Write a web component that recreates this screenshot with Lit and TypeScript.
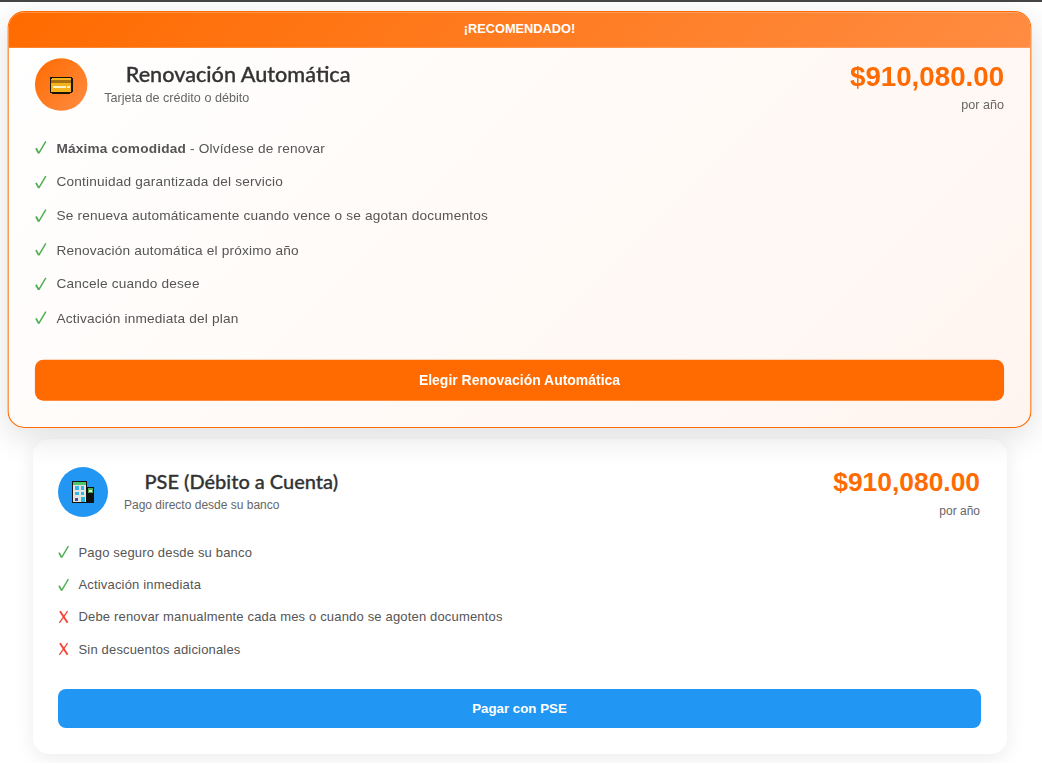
import { LitElement, html, css, svg } from "lit";
import { customElement } from "lit/decorators.js";

const cardIcon = svg`<svg class="emoji" viewBox="0 0 24 24" width="24" height="24" shape-rendering="crispEdges">
  <rect x="1" y="4.5" width="22" height="16" rx="2.5" fill="#1a1408"/>
  <rect x="2.5" y="6" width="19" height="13" rx="1" fill="#f5b21a"/>
  <rect x="2.5" y="8" width="19" height="2.5" fill="#a9700f"/>
  <rect x="4.5" y="13.5" width="12" height="1.6" fill="#fff3c9"/>
  <rect x="18" y="13.5" width="2" height="1.6" fill="#fff3c9"/>
</svg>`;

const bankIcon = svg`<svg class="emoji" viewBox="0 0 24 24" width="24" height="24" shape-rendering="crispEdges">
  <rect x="15" y="7" width="8" height="16" fill="#111"/>
  <rect x="16.5" y="8" width="5.5" height="5" fill="#4caf50"/>
  <rect x="18" y="9.5" width="2.5" height="2" fill="#d8f5d8"/>
  <rect x="1" y="1" width="15" height="22" fill="#111"/>
  <rect x="2" y="2" width="13" height="2.5" fill="#4cc76a"/>
  <rect x="2" y="4.5" width="13" height="17.5" fill="#e4e4e0"/>
  <rect x="4" y="6" width="3.5" height="3.5" fill="#35b6ea"/>
  <rect x="9.5" y="6" width="3.5" height="3.5" fill="#35b6ea"/>
  <rect x="4" y="11.5" width="3.5" height="3.5" fill="#35b6ea"/>
  <rect x="9.5" y="11.5" width="3.5" height="3.5" fill="#35b6ea"/>
  <rect x="9.5" y="17" width="4" height="5" fill="#29b6d8"/>
  <rect x="4" y="18" width="3" height="2.5" fill="#3a4fa8"/>
</svg>`;

const checkMark = svg`<svg class="mark-svg" viewBox="0 0 12 14" width="12" height="14">
  <path d="M1 7.6 L3.6 12.4" fill="none" stroke="#4caf50" stroke-width="1.7"/>
  <path d="M3.6 12.6 L10.4 1.2" fill="none" stroke="#4caf50" stroke-width="1.4"/>
</svg>`;

const crossMark = svg`<svg class="mark-svg" viewBox="0 0 12 14" width="12" height="14">
  <path d="M2 1.2 L9.6 12.8" fill="none" stroke="#f44336" stroke-width="1.9"/>
  <path d="M9.6 1.2 L1.4 12.8" fill="none" stroke="#f44336" stroke-width="1.3"/>
</svg>`;

type Feature = { ok: boolean; strong?: string; text: string };

const autoFeatures: Feature[] = [
  { ok: true, strong: "Máxima comodidad", text: " - Olvídese de renovar" },
  { ok: true, text: "Continuidad garantizada del servicio" },
  { ok: true, text: "Se renueva automáticamente cuando vence o se agotan documentos" },
  { ok: true, text: "Renovación automática el próximo año" },
  { ok: true, text: "Cancele cuando desee" },
  { ok: true, text: "Activación inmediata del plan" },
];

const pseFeatures: Feature[] = [
  { ok: true, text: "Pago seguro desde su banco" },
  { ok: true, text: "Activación inmediata" },
  { ok: false, text: "Debe renovar manualmente cada mes o cuando se agoten documentos" },
  { ok: false, text: "Sin descuentos adicionales" },
];

@customElement("app-root")
export class AppRoot extends LitElement {
  static styles = css`
    :host {
      display: block;
      font-family: "Liberation Sans", Arial, sans-serif;
      color: #333;
      background: #fff;
    }
    * { box-sizing: border-box; }
    .page {
      border-top: 2px solid #444;
      padding: 19px 0 0 33px;
      height: 763px;
      overflow: hidden;
    }
    .card {
      width: 974px;
      background: #fff;
      border-radius: 16px;
      box-shadow: 0 4px 20px rgba(0, 0, 0, 0.08);
      padding: 28px 26px 26.4px 25px;
    }
    .recommended {
      width: 975px;
      height: 397px;
      padding: 0 0 25px;
      margin: 0 0 21px -1px;
      border: 1px solid #ff6b00;
      overflow: hidden;
      transform: scale(1.05);
      background: linear-gradient(135deg, #fff 0%, #fff5f0 100%);
      box-shadow: 0 8px 30px rgba(0, 0, 0, 0.12);
    }
    .banner {
      height: 34px;
      padding-bottom: 2px;
      display: flex;
      align-items: center;
      justify-content: center;
      background: linear-gradient(135deg, #ff6b00 0%, #ff8c42 100%);
      color: #fff;
      font-size: 12.2px;
      font-weight: 700;
    }
    .body { padding: 10px 25px 0; }
    .head {
      display: flex;
      justify-content: space-between;
      align-items: flex-start;
      height: 50px;
    }
    .identity { display: flex; align-items: center; gap: 16px; }
    .icon {
      width: 50px;
      height: 50px;
      border-radius: 50%;
      display: flex;
      align-items: center;
      justify-content: center;
      flex: none;
    }
    .icon.orange { background: linear-gradient(135deg, #ff6b00 0%, #ff8c42 100%); }
    .icon.blue { background: #2196f3; }
    .emoji { display: block; }
    .text { padding-bottom: 4px; }
    .title {
      margin: 0 0 0 20.5px;
      font-family: Lato, sans-serif;
      font-size: 20px;
      line-height: 24px;
      font-weight: 500;
      color: #333;
      -webkit-text-stroke: 0.3px #333;
    }
    .recommended .title { font-size: 20.6px; margin-top: 1.5px; }
    .sub {
      margin-top: 5px;
      font-size: 12px;
      line-height: 14px;
      color: #666;
    }
    .recommended .sub { margin-top: 3.5px; }
    .price-box { text-align: right; padding: 0 1px 0 0; }
    .recommended .price-box { padding: 2px 0 0; }
    .price {
      font-size: 26.4px;
      line-height: 30px;
      font-weight: 700;
      color: #ff6b00;
    }
    .per {
      margin-top: 7px;
      font-size: 12px;
      line-height: 14px;
      color: #666;
    }
    .recommended .per { margin-top: 5px; }
    .list {
      list-style: none;
      margin: 19px 0 0;
      padding: 0;
      display: flex;
      flex-direction: column;
    }
    .list li {
      height: 32.4px;
      display: flex;
      align-items: center;
      font-size: 13px;
      letter-spacing: 0.17px;
      color: #555;
    }
    .mark { width: 20.5px; flex: none; display: flex; }
    .mark-svg { display: block; }
    .cta {
      display: block;
      width: 100%;
      height: 39px;
      margin-top: 23px;
      border: 0;
      border-radius: 8px;
      color: #fff;
      font-family: inherit;
      font-size: 13.3px;
      font-weight: 700;
    }
    .cta.orange { background: #ff6b00; margin-top: 24px; }
    .cta.blue { background: #2196f3; }
  `;

  private feats(items: Feature[]) {
    return html`<ul class="list">
      ${items.map(
        (f) => html`<li>
          <span class="mark">${f.ok ? checkMark : crossMark}</span>
          <span>${f.strong ? html`<strong>${f.strong}</strong>` : ""}${f.text}</span>
        </li>`
      )}
    </ul>`;
  }

  private head(color: string, icon: unknown, title: string, sub: string) {
    return html`<div class="head">
      <div class="identity">
        <div class="icon ${color}">${icon}</div>
        <div class="text">
          <h3 class="title">${title}</h3>
          <div class="sub">${sub}</div>
        </div>
      </div>
      <div class="price-box">
        <div class="price">$910,080.00</div>
        <div class="per">por año</div>
      </div>
    </div>`;
  }

  render() {
    return html`<div class="page">
      <section class="card recommended">
        <div class="banner">¡RECOMENDADO!</div>
        <div class="body">
          ${this.head("orange", cardIcon, "Renovación Automática", "Tarjeta de crédito o débito")}
          ${this.feats(autoFeatures)}
          <button class="cta orange">Elegir Renovación Automática</button>
        </div>
      </section>
      <section class="card">
        ${this.head("blue", bankIcon, "PSE (Débito a Cuenta)", "Pago directo desde su banco")}
        ${this.feats(pseFeatures)}
        <button class="cta blue">Pagar con PSE</button>
      </section>
    </div>`;
  }
}
